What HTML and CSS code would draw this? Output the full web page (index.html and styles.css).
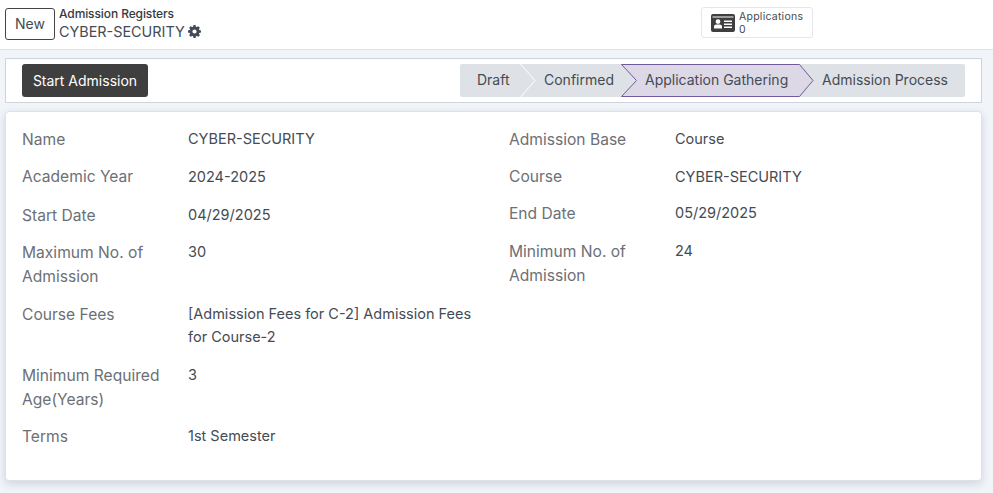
FILE: index.html
```html
<!DOCTYPE html>
<html lang="en">
<head>
<meta charset="utf-8">
<title>Admission Registers</title>
<link rel="stylesheet" href="styles.css">
</head>
<body>
<header class="topbar">
  <button class="btn-new">New</button>
  <div class="crumbs">
    <div class="crumb-parent">Admission Registers</div>
    <div class="crumb-current">CYBER-SECURITY
      <svg class="gear" viewBox="0 0 16 16" width="13" height="13"><path fill="#444b54" fill-rule="evenodd" d="M6.7 0h2.6l.4 2.1 1.2.5 1.8-1.2 1.9 1.9-1.2 1.8.5 1.2 2.1.4v2.6l-2.1.4-.5 1.2 1.2 1.8-1.9 1.9-1.8-1.2-1.2.5-.4 2.1H6.7l-.4-2.1-1.2-.5-1.8 1.2-1.9-1.9 1.2-1.8-.5-1.2L0 9.3V6.7l2.1-.4.5-1.2-1.2-1.8 1.9-1.9 1.8 1.2 1.2-.5zM8 5.4a2.6 2.6 0 1 0 0 5.2 2.6 2.6 0 0 0 0-5.2z"/></svg>
    </div>
  </div>
  <a class="stat">
    <svg class="stat-icon" viewBox="0 0 24 18" width="24" height="18"><path fill="#3f3f3f" fill-rule="evenodd" d="M2 0h20a2 2 0 0 1 2 2v14a2 2 0 0 1-2 2H2a2 2 0 0 1-2-2V2a2 2 0 0 1 2-2zM1.500 2.500v1h21v-1zM7 5.200a2.400 2.400 0 1 0 0 4.800 2.400 2.400 0 0 0 0-4.800zM3 14.500h8v-1.700c0-1.400-1.100-2.300-2.400-2.300H5.400c-1.300 0-2.400.9-2.400 2.300zM13 6.500V8h8V6.500zM13 9.500V11h8V9.500zM13 12.500V14h8v-1.500z"/></svg>
    <span class="stat-text"><span class="stat-line">Applications</span><span class="stat-line">0</span></span>
  </a>
</header>
<main class="content">
  <section class="statusbar">
    <button class="btn-primary">Start Admission</button>
    <div class="steps">
      <svg class="steps-bg" viewBox="0 0 505 33" width="505" height="33">
        <path fill="#dee2e6" d="M2 0H503a2 2 0 0 1 2 2V31a2 2 0 0 1-2 2H2a2 2 0 0 1-2-2V2a2 2 0 0 1 2-2z"/>
        <path fill="none" stroke="#fff" d="M60.500 0L75 16.500 60.500 33"/>
        <path fill="#dcd8e6" stroke="#6f5b9c" d="M161.500.5H339.500L353 16.500 339.500 32.500H161.500L176.500 16.500z"/>
      </svg>
      <span class="step step-draft">Draft</span>
      <span class="step step-confirmed">Confirmed</span>
      <span class="step step-gathering">Application Gathering</span>
      <span class="step step-process">Admission Process</span>
    </div>
  </section>
  <section class="card">
    <div class="col">
      <div class="row r-name"><div class="label">Name</div><div class="value">CYBER-SECURITY</div></div>
      <div class="row r-year"><div class="label">Academic Year</div><div class="value">2024-2025</div></div>
      <div class="row r-start"><div class="label">Start Date</div><div class="value">04/29/2025</div></div>
      <div class="row r-max"><div class="label">Maximum No. of Admission</div><div class="value">30</div></div>
      <div class="row r-fees"><div class="label">Course Fees</div><div class="value">[Admission Fees for C-2] Admission Fees for Course-2</div></div>
      <div class="row r-age"><div class="label">Minimum Required Age(Years)</div><div class="value">3</div></div>
      <div class="row r-terms"><div class="label">Terms</div><div class="value">1st Semester</div></div>
    </div>
    <div class="col">
      <div class="row r-name"><div class="label">Admission Base</div><div class="value">Course</div></div>
      <div class="row r-course"><div class="label">Course</div><div class="value">CYBER-SECURITY</div></div>
      <div class="row r-end"><div class="label">End Date</div><div class="value">05/29/2025</div></div>
      <div class="row r-min"><div class="label">Minimum No. of Admission</div><div class="value">24</div></div>
    </div>
  </section>
</main>
</body>
</html>
```
FILE: styles.css
```css
* { box-sizing: border-box; }
html, body { margin: 0; height: 100%; }
body {
  width: 993px;
  height: 493px;
  overflow: hidden;
  background: #f1f4f9;
  font-family: "Inter", "Noto Sans", sans-serif;
  font-size: 14px;
  color: #444b54;
}
.topbar {
  display: flex;
  height: 50px;
  padding: 8px 0 0 5px;
  background: #fff;
  border-bottom: 1px solid #dee2e6;
  position: relative;
}
.btn-new {
  width: 50px;
  height: 32px;
  padding: 0 0 1px;
  background: #fff;
  border: 1px solid #444;
  border-radius: 3px;
  font: inherit;
  color: #444b54;
}
.crumbs { margin-left: 4px; margin-top: -3px; }
.crumb-parent { font-size: 12px; font-weight: 500; line-height: 17px; color: #343a40; letter-spacing: -.1px; }
.crumb-current { font-size: 14.4px; line-height: 19px; display: flex; align-items: center; gap: 3px; }
.stat {
  display: flex;
  align-items: center;
  gap: 4px;
  width: 112px;
  height: 31px;
  margin-left: auto;
  margin-right: 180px;
  margin-top: -1px;
  padding-left: 9px;
  border: 1px solid #e4e6ea;
  border-radius: 3px;
  font-size: 10.5px;
  letter-spacing: .25px;
}
.stat-text { display: flex; flex-direction: column; }
.stat-line { display: block; height: 13px; line-height: 13px; }
.content { padding: 8px 11px 0 5px; }
.statusbar {
  display: flex;
  justify-content: space-between;
  align-items: center;
  height: 45px;
  padding: 0 16px;
  background: #fff;
  border: 1px solid #ced4da;
}
.btn-primary {
  width: 126px;
  height: 33px;
  padding: 0;
  background: #3f3f3f;
  color: #fff;
  border: 0;
  border-radius: 3px;
  font: inherit;
}
.steps { position: relative; width: 505px; height: 33px; display: flex; align-items: center; }
.steps-bg { position: absolute; left: 0; top: 0; }
.step { position: absolute; top: 6px; line-height: 19px; white-space: nowrap; }
.step-draft { left: 17px; }
.step-confirmed { left: 84px; }
.step-gathering { left: 185px; }
.step-process { left: 362px; }
.card {
  display: grid;
  grid-template-columns: 487px 1fr;
  height: 370px;
  margin-top: 8px;
  padding: 16px 16px 0;
  background: #fff;
  border: 1px solid #dee2e6;
  border-radius: 4px;
  box-shadow: 0 3px 8px rgba(60, 70, 90, .18);
}
.row { display: flex; }
.label { width: 166px; padding-right: 16px; color: #6c7075; font-size: 15.6px; line-height: 24px; flex: none; }
.value { width: 290px; margin-top: -1px; font-size: 14.5px; line-height: 23px; }
.r-name { height: 37px; }
.r-year { height: 39px; }
.r-year .value, .r-course .value { margin-top: 0; }
.r-course { height: 37px; }
.r-start { height: 37px; }
.r-end { height: 38px; }
.r-max { height: 62px; }
.r-fees { height: 61px; }
.r-age { height: 61px; }
```
